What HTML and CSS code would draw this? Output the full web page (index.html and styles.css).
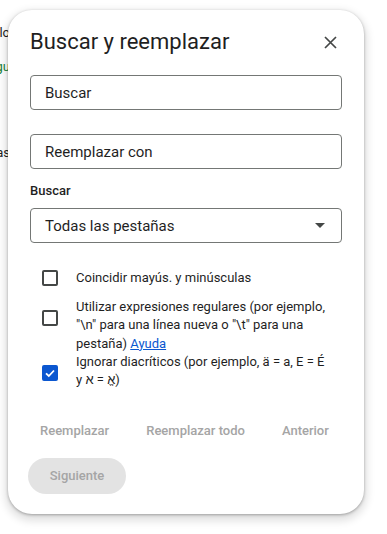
FILE: index.html
```html
<!DOCTYPE html>
<html lang="es">
<head>
    <meta charset="UTF-8">
    <meta name="viewport" content="width=device-width, initial-scale=1.0">
    <title>Buscar y reemplazar</title>
    <link rel="stylesheet" href="styles.css">
</head>
<body>
    <div class="sheet">
        <div class="sheet-line l1"><span>Modelo</span></div>
        <div class="sheet-line l2 green"><span>Agregu</span></div>
        <div class="sheet-line l3"><span>Notas</span></div>
    </div>

    <div class="dialog">
        <div class="dialog-head">
            <h1>Buscar y reemplazar</h1>
            <button class="close" aria-label="Cerrar">
                <svg width="13" height="13" viewBox="0 0 13 13">
                    <path d="M1 1 L12 12 M12 1 L1 12" stroke="#444746" stroke-width="1.7" fill="none"/>
                </svg>
            </button>
        </div>

        <div class="field first"><span class="placeholder">Buscar</span></div>
        <div class="field second"><span class="placeholder">Reemplazar con</span></div>

        <div class="label">Buscar</div>
        <div class="field select">
            <span class="value">Todas las pestañas</span>
            <span class="arrow"></span>
        </div>

        <div class="options">
            <div class="option">
                <div class="check-wrap"><span class="check"></span></div>
                <div class="option-text single">Coincidir mayús. y minúsculas</div>
            </div>
            <div class="option">
                <div class="check-wrap"><span class="check"></span></div>
                <div class="option-text">Utilizar expresiones regulares (por ejemplo, "\n" para una línea nueva o "\t" para una pestaña) <a href="#">Ayuda</a></div>
            </div>
            <div class="option">
                <div class="check-wrap">
                    <span class="check on">
                        <svg width="12" height="12" viewBox="0 0 12 12">
                            <path d="M2 6.3 L4.8 9 L10 3.5" stroke="#fff" stroke-width="1.8" fill="none"/>
                        </svg>
                    </span>
                </div>
                <div class="option-text">Ignorar diacríticos (por ejemplo, ä = a, E = É<br>y <bdi>א</bdi> = <bdi>אֱ</bdi>)</div>
            </div>
        </div>

        <div class="actions">
            <button class="text-btn">Reemplazar</button>
            <button class="text-btn">Reemplazar todo</button>
            <button class="text-btn">Anterior</button>
            <button class="pill-btn">Siguiente</button>
        </div>
    </div>
</body>
</html>
```

FILE: styles.css
```css
body{
    margin: 0;
    background-color: white;
    font-family: Roboto, "Liberation Sans", sans-serif;
    color: #1f1f1f;
}
.sheet{
    width: 10px;
    padding-top: 25px;
    font-size: 13px;
}
.sheet-line{
    display: flex;
    justify-content: flex-end;
    overflow: hidden;
    white-space: nowrap;
    height: 16px;
}
.l2{
    margin-top: 18px;
}
.l3{
    margin-top: 70px;
}
.green{
    color: #188038;
}
.dialog{
    position: absolute;
    left: 8px;
    top: 10px;
    width: 356px;
    height: 504px;
    box-sizing: border-box;
    padding: 18px 22px 0 22px;
    background-color: white;
    border-radius: 24px;
    box-shadow: 0 1px 3px rgba(0, 0, 0, 0.3), 0 4px 8px 3px rgba(0, 0, 0, 0.12);
}
.dialog-head{
    display: flex;
    justify-content: space-between;
    align-items: center;
    height: 28px;
}
h1{
    margin: 0;
    font-size: 22px;
    font-weight: 400;
    line-height: 28px;
    color: #1f1f1f;
}
.close{
    width: 24px;
    height: 24px;
    padding: 0;
    border: none;
    background: none;
    display: flex;
    align-items: center;
    justify-content: center;
}
.field{
    box-sizing: border-box;
    height: 35px;
    border: 1px solid #747775;
    border-radius: 4px;
    padding: 0 14px;
    display: flex;
    align-items: center;
    font-size: 15px;
    color: #1f1f1f;
}
.first{
    margin-top: 19px;
}
.second{
    margin-top: 24px;
}
.label{
    margin-top: 12px;
    font-size: 13px;
    font-weight: 500;
    line-height: 20px;
    color: #1f1f1f;
}
.select{
    margin-top: 7px;
    justify-content: space-between;
    padding-right: 16px;
}
.arrow{
    width: 0;
    height: 0;
    border-left: 5px solid transparent;
    border-right: 5px solid transparent;
    border-top: 5px solid #444746;
}
.options{
    margin-top: 15px;
    padding-left: 3px;
}
.option{
    display: flex;
    align-items: flex-start;
}
.check-wrap{
    width: 40px;
    height: 40px;
    flex-shrink: 0;
    display: flex;
    align-items: center;
    justify-content: center;
    margin-left: -3px;
    margin-right: 6px;
}
.check{
    box-sizing: border-box;
    width: 16px;
    height: 16px;
    border: 2px solid #444746;
    border-radius: 2px;
    display: flex;
    align-items: center;
    justify-content: center;
}
.check.on{
    background-color: #0b57d0;
    border-color: #0b57d0;
}
.option-text{
    max-width: 260px;
    font-size: 13px;
    line-height: 18.3px;
    color: #1f1f1f;
}
.option-text.single{
    min-height: 40px;
    display: flex;
    align-items: center;
}
.option-text a{
    color: #0b57d0;
}
.actions{
    margin-top: 20px;
    margin-left: -2px;
    display: flex;
    flex-wrap: wrap;
    gap: 9px 13px;
}
button{
    font-family: Roboto, "Liberation Sans", sans-serif;
}
.text-btn{
    height: 36px;
    padding: 0 12px;
    border: none;
    background: none;
    font-size: 13px;
    font-weight: 500;
    color: #a5a5a5;
}
.pill-btn{
    height: 36px;
    width: 98px;
    border: none;
    border-radius: 18px;
    background-color: #e3e3e3;
    font-size: 13px;
    font-weight: 500;
    color: #a5a5a5;
}
```
